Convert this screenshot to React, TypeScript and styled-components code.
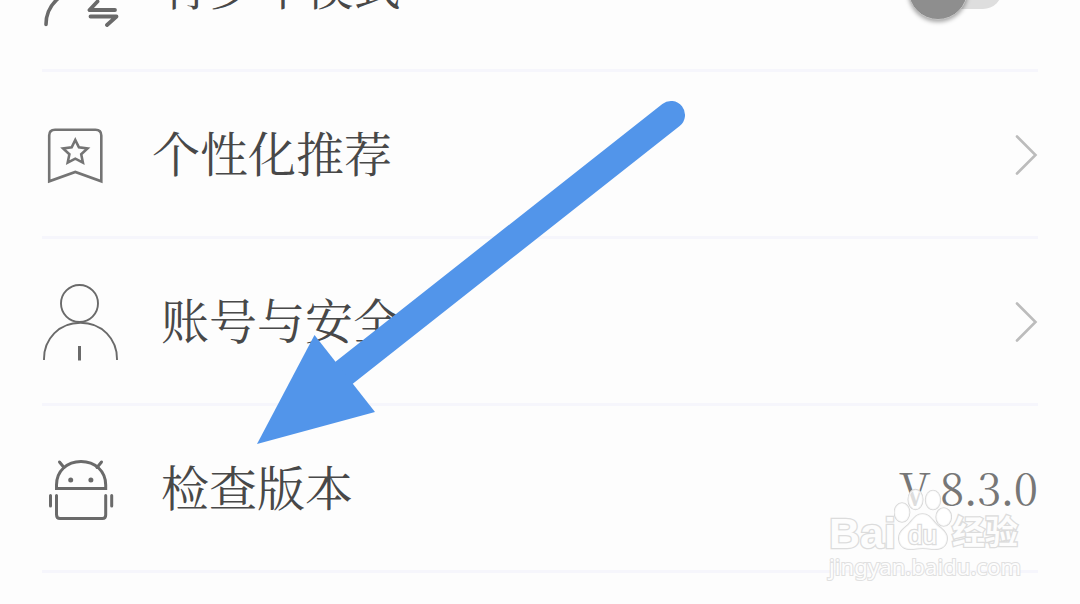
import React from "react";
import styled, { createGlobalStyle } from "styled-components";

interface IRow {
  title: string;
  icon: React.ReactNode;
  iconWidth: number;
  extra: React.ReactNode;
}

const TeenIcon = () => (
  <svg width="80" height="80" viewBox="0 0 80 80" fill="none" stroke="#6a6a6a">
    <path d="M4 77.500C4 67 8 59 15 52.500C19 49 23 46 27 44" strokeWidth="3.600" strokeLinecap="round" />
    <circle cx="39" cy="22" r="19" strokeWidth="3" />
    <path
      d="M55.500 54.500L47.500 63H73M48.500 69.500H74.500L65 78"
      strokeWidth="3.800"
      strokeLinecap="round"
      strokeLinejoin="round"
    />
  </svg>
);

const BookmarkIcon = () => (
  <svg width="80" height="80" viewBox="0 0 80 80" fill="none" stroke="#747474">
    <path
      d="M7.200 67.300V21.500Q7.200 15.700 13 15.700H53.500Q59.300 15.700 59.300 21.500V67.300L33.300 58Z"
      strokeWidth="2.600"
    />
    <path
      d="M33.300 26L36.900 33.300L45.500 34.400L39.200 40.300L40.900 48.600L33.300 44.700L25.700 48.600L27.400 40.300L21.100 34.400L29.700 33.300Z"
      strokeWidth="2.600"
    />
  </svg>
);

const UserIcon = () => (
  <svg width="80" height="80" viewBox="0 0 80 80" fill="none" stroke="#6a6a6a">
    <circle cx="37.500" cy="22.500" r="18.500" strokeWidth="1.900" />
    <path d="M2 79V78C2 58 17 41.800 38.500 41.800S75 58 75 78V79" strokeWidth="1.900" />
    <path d="M37.500 65V79.500" strokeWidth="3" />
  </svg>
);

const AndroidIcon = () => (
  <svg
    width="80"
    height="80"
    viewBox="0 0 80 80"
    fill="none"
    stroke="#6a6a6a"
    strokeWidth="3"
    strokeLinecap="round"
  >
    <path d="M14.500 40.500V37C14.500 23 25 13.500 39 13.500S63.700 23 63.700 37V40.500Z" />
    <path d="M17.500 14L22 19.500M59.500 14L55 19.500" />
    <path d="M14.500 47.500V66.500Q14.500 70.500 18 70.500H60.500Q63.700 70.500 63.700 67V47.500" />
    <path d="M8.500 47.500V58M69.700 47.500V58" />
    <circle cx="28.700" cy="32" r="2.500" fill="#6a6a6a" stroke="none" />
    <circle cx="48.900" cy="32" r="2.500" fill="#6a6a6a" stroke="none" />
  </svg>
);

const Chevron = () => (
  <svg width="24" height="44" viewBox="0 0 24 44" fill="none">
    <path
      d="M3 4.500L21.500 23L3 41.500"
      stroke="#bcbcbc"
      strokeWidth="2.600"
      strokeLinecap="round"
    />
  </svg>
);

const PawLogo = () => (
  <svg width="58" height="64" viewBox="0 0 58 64">
    <g fill="rgba(255,255,255,.75)" stroke="#d8d8d8" strokeWidth="1.700">
      <ellipse cx="8" cy="24.500" rx="7.500" ry="9.500" />
      <ellipse cx="21.500" cy="11.500" rx="7.200" ry="9.800" />
      <ellipse cx="39" cy="12" rx="7.300" ry="9.500" />
      <ellipse cx="49.700" cy="29" rx="7.500" ry="9" />
      <path d="M28.500 26C21 26 19 32 14 37C9 41 4 45 5 52C6 60 13 62 20 61Q29 59.500 37 61C45 62 52 60 53 52C54 45 48 41 43 37C38 32 36 26 28.500 26Z" />
    </g>
  </svg>
);

const rows: IRow[] = [
  {
    title: "青少年模式",
    icon: <TeenIcon />,
    iconWidth: 119,
    extra: "switch",
  },
  {
    title: "个性化推荐",
    icon: <BookmarkIcon />,
    iconWidth: 110,
    extra: <Chevron />,
  },
  {
    title: "账号与安全",
    icon: <UserIcon />,
    iconWidth: 119,
    extra: <Chevron />,
  },
  {
    title: "检查版本",
    icon: <AndroidIcon />,
    iconWidth: 119,
    extra: "version",
  },
];

const renderExtra = (extra: React.ReactNode) => {
  if (extra === "switch") {
    return (
      <Switch>
        <Knob />
      </Switch>
    );
  }
  if (extra === "version") return <Version>V 8.3.0</Version>;
  return extra;
};

export default function App() {
  return (
    <Screen>
      <GlobalStyle />
      <List>
        {rows.map((row) => (
          <Row key={row.title}>
            <IconBox $width={row.iconWidth}>{row.icon}</IconBox>
            <Title>{row.title}</Title>
            {renderExtra(row.extra)}
          </Row>
        ))}
      </List>
      <Arrow viewBox="0 0 1080 604">
        <path d="M671 115L340 376" stroke="#5295ea" strokeWidth="28" strokeLinecap="round" />
        <path d="M257 444L314.500 335L375 412Z" fill="#5295ea" />
      </Arrow>
      <Watermark>
        <Brand>
          <Latin>Bai</Latin>
          <Paw>
            <PawLogo />
            <Du>du</Du>
          </Paw>
          <Chinese>经验</Chinese>
        </Brand>
        <Site>jingyan.baidu.com</Site>
      </Watermark>
    </Screen>
  );
}

const GlobalStyle = createGlobalStyle`
  body {
    margin: 0;
    background: #fdfdfd;
  }
`;
const Screen = styled.main`
  position: relative;
  width: 1080px;
  height: 604px;
  overflow: hidden;
  background: #fdfdfd;
  font-family: "Noto Serif CJK SC", "Noto Sans CJK SC", serif;
`;
const List = styled.div`
  padding: 0 42px;
  margin-top: -95px;
`;
const Row = styled.div`
  box-sizing: border-box;
  height: 167px;
  display: flex;
  align-items: center;
  border-bottom: 3px solid #f6f6fc;
`;
const IconBox = styled.div<{ $width: number }>`
  width: ${(props) => props.$width}px;
  flex: none;
  height: 80px;
`;
const Title = styled.span`
  flex: 1;
  padding-bottom: 5px;
  font-size: 48px;
  line-height: 72px;
  color: #484848;
`;
const Version = styled.span`
  padding: 0 1px 4px 0;
  font-size: 44px;
  line-height: 72px;
  letter-spacing: -0.9px;
  color: #777;
`;
const Switch = styled.div`
  width: 94px;
  height: 38px;
  margin: 6px 36px 0 0;
  border-radius: 19px;
  background: #dedede;
  display: flex;
  align-items: center;
`;
const Knob = styled.div`
  box-sizing: border-box;
  width: 60px;
  height: 60px;
  flex: none;
  border: 1px solid #c4c4c4;
  border-radius: 50%;
  background: #8e8e8e;
  box-shadow: 0 2px 4px rgba(0, 0, 0, 0.35);
`;
const Arrow = styled.svg`
  position: absolute;
  inset: 0;
  width: 1080px;
  height: 604px;
`;
const Watermark = styled.div`
  position: absolute;
  left: 829px;
  top: 488px;
  width: 200px;
  color: #fdfdfd;
  -webkit-text-stroke: 2.6px #dcdcdc;
  paint-order: stroke fill;
  font-family: "Liberation Sans", "Noto Sans CJK SC", sans-serif;
`;
const Brand = styled.div`
  display: flex;
  height: 64px;
`;
const Latin = styled.span`
  width: 65px;
  padding-top: 20px;
  font-size: 43px;
  line-height: 50px;
  font-weight: 700;
`;
const Paw = styled.div`
  position: relative;
  width: 58px;
`;
const Du = styled.span`
  position: absolute;
  left: 14px;
  top: 33px;
  font-size: 26px;
  line-height: 28px;
`;
const Chinese = styled.span`
  padding-top: 26px;
  font-size: 33px;
  line-height: 38px;
  font-weight: 700;
`;
const Site = styled.div`
  font-family: "Noto Sans", sans-serif;
  font-size: 22px;
  line-height: 28px;
  letter-spacing: 0.1px;
  -webkit-text-stroke: 2px #e0e0e0;
`;
